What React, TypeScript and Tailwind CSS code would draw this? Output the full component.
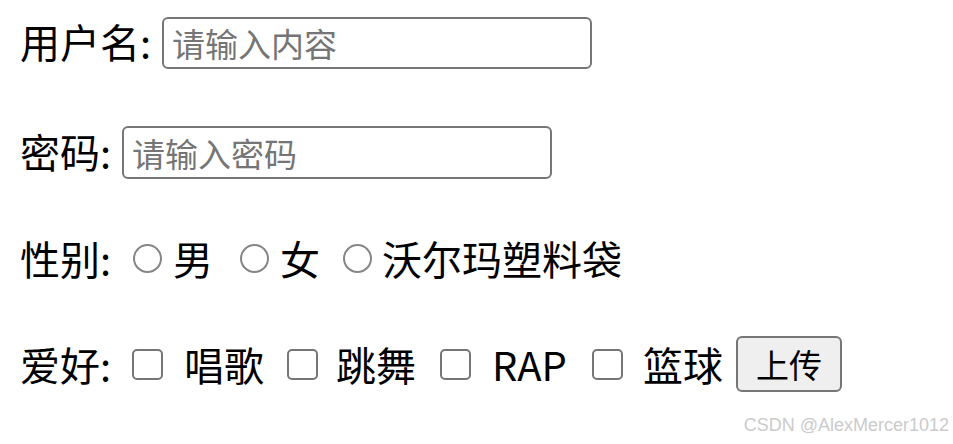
import React from 'react';

const cjk = "font-['Microsoft_YaHei','Noto_Sans_CJK_SC',sans-serif]";

function Radio() {
  return (
    <span className="inline-block w-[29px] h-[29px] shrink-0 rounded-full border-2 border-[#858585] bg-white" />
  );
}

function Check({ className = '' }: { className?: string }) {
  return (
    <span
      className={`inline-block w-[31px] h-[31px] shrink-0 rounded-[5px] border-[2.5px] border-[#767676] bg-white ${className}`}
    />
  );
}

export default function App() {
  return (
    <div className={`relative w-[953px] h-[444px] bg-white text-black ${cjk}`}>
      <form className="flex flex-col pl-5 pt-[17px] text-[40px] leading-none">
        {/* 用户名 */}
        <div className="flex items-center h-[52px]">
          <span className="w-[142px] shrink-0 -mt-[4px]">用户名:</span>
          <input
            type="text"
            placeholder="请输入内容"
            className={`w-[430px] h-[52px] rounded-[6px] border-2 border-[#767676] bg-white pl-[8px] text-[33px] outline-none placeholder:text-[#757575] ${cjk}`}
          />
        </div>

        {/* 密码 */}
        <div className="flex items-center h-[53px] mt-[57px]">
          <span className="w-[102px] shrink-0 -mt-[4px]">密码:</span>
          <input
            type="password"
            placeholder="请输入密码"
            className={`w-[430px] h-[53px] rounded-[6px] border-2 border-[#767676] bg-white pl-[8px] text-[33px] outline-none placeholder:text-[#757575] ${cjk}`}
          />
        </div>

        {/* 性别 */}
        <div className="flex items-center h-[50px] mt-[54px]">
          <span className="w-[113px] shrink-0">性别:</span>
          <Radio />
          <span className="ml-[11px]">男</span>
          <span className="ml-[27px] flex">
            <Radio />
          </span>
          <span className="ml-[11px]">女</span>
          <span className="ml-[23px] flex">
            <Radio />
          </span>
          <span className="ml-[10px]">沃尔玛塑料袋</span>
        </div>

        {/* 爱好 */}
        <div className="flex items-center h-[56px] mt-[53px]">
          <span className="w-[112px] shrink-0">爱好:</span>
          <Check />
          <span className="ml-[21px]">唱歌</span>
          <Check className="ml-[23px]" />
          <span className="ml-[18px]">跳舞</span>
          <Check className="ml-[24px]" />
          <span className="ml-[21px] w-[76px] inline-block">RAP</span>
          <Check className="ml-[24px]" />
          <span className="ml-[20px]">篮球</span>
          <button
            type="button"
            className={`ml-[13px] w-[106px] h-[56px] rounded-[6px] border-2 border-[#767676] bg-[#efefef] text-[33px] leading-none ${cjk}`}
          >
            上传
          </button>
        </div>
      </form>

      <span className="absolute right-[4px] top-[416px] font-['Liberation_Sans',Arial,sans-serif] text-[18px] leading-none text-[#cbcbcb]">
        CSDN @AlexMercer1012
      </span>
    </div>
  );
}
